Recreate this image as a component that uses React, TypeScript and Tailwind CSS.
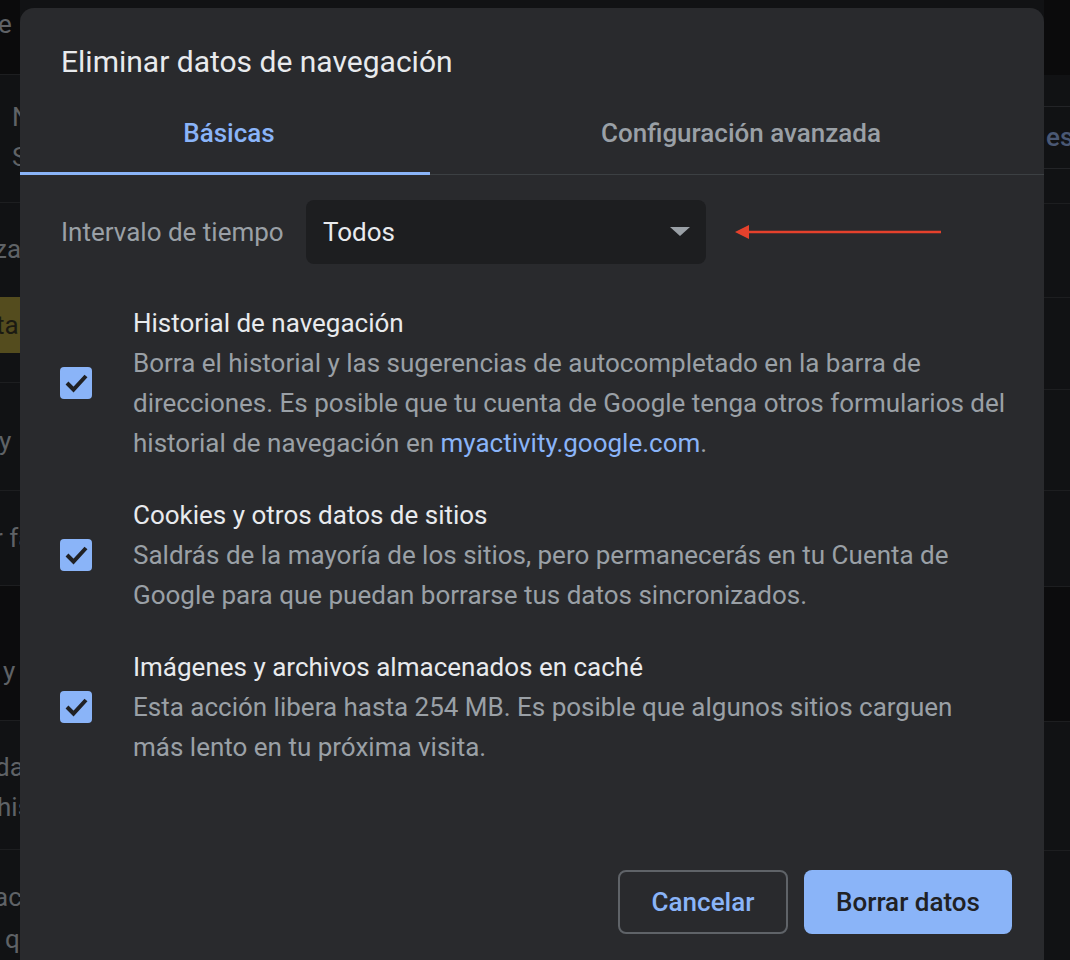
import React from 'react';

// background page strips peeking out on both sides of the dialog
function LeftStrip() {
  const txt = "text-[26px] leading-[40px] text-[#5f6266] whitespace-nowrap";
  return (
    <div className="w-[20px] flex flex-col overflow-hidden shrink-0">
      <div className="h-[76px] bg-[#0b0b0c] border-b border-[#1d1e20] pt-[4px]">
        <div className={`${txt} -ml-[2px]`}>e</div>
      </div>
      <div className="h-[129px] border-b border-[#1d1e20] pt-[22px] pl-[12px]">
        <div className={txt}>N</div>
        <div className={txt}>S</div>
      </div>
      <div className="h-[95px] pt-[26px]">
        <div className={`${txt} -ml-[6px]`}>za</div>
      </div>
      <div className="h-[87px] border-b border-[#1d1e20]">
        <div className="h-[56px] bg-[#544c1e] flex items-center">
          <div className="text-[26px] text-[#1b1a12] -ml-[4px] whitespace-nowrap">ta</div>
        </div>
      </div>
      <div className="h-[108px] border-b border-[#1d1e20] pt-[38px]">
        <div className={`${txt} -ml-[1px]`}>y</div>
      </div>
      <div className="h-[95px] pt-[27px]">
        <div className={`${txt} -ml-[6px]`}>r fa</div>
      </div>
      <div className="h-[137px] bg-[#0c0c0d] border-y border-[#1d1e20] pt-[65px]">
        <div className={`${txt} pl-[3px]`}>y</div>
      </div>
      <div className="h-[130px] border-b border-[#1d1e20] pt-[26px]">
        <div className={`${txt} -ml-[5px] leading-[37px]`}>da</div>
        <div className={`${txt} -ml-[3px] leading-[37px]`}>his</div>
      </div>
      <div className="h-[110px] pt-[26px]">
        <div className={`${txt} -ml-[6px] leading-[42px]`}>ac</div>
        <div className={`${txt} pl-[5px] leading-[42px]`}>q</div>
      </div>
    </div>
  );
}

function RightStrip() {
  return (
    <div className="w-[26px] flex flex-col overflow-hidden shrink-0">
      <div className="h-[76px] bg-[#0b0b0c]" />
      <div className="h-[32px] border-b border-[#232427]" />
      <div className="h-[62px] border-b border-[#232427] flex items-center">
        <div className="text-[26px] font-medium text-[#4a5874] ml-[2px] whitespace-nowrap">esa</div>
      </div>
      <div className="h-[35px] border-b border-[#1d1e20]" />
      <div className="h-[95px] border-b border-[#1d1e20]" />
      <div className="h-[93px] border-b border-[#1d1e20]" />
      <div className="h-[102px] border-b border-[#1d1e20]" />
      <div className="h-[95px]" />
      <div className="h-[137px] bg-[#0c0c0d] border-y border-[#1d1e20]" />
      <div className="h-[130px] border-b border-[#1d1e20]" />
      <div className="h-[110px]" />
    </div>
  );
}

function Check() {
  return (
    <div className="w-[32px] h-[32px] rounded-[4px] bg-[#8ab4f8] shrink-0 flex items-center justify-center">
      <svg width="32" height="32" viewBox="0 0 32 32">
        <polyline points="7,16 13.5,22.5 26,9" fill="none" stroke="#202124" strokeWidth="4" />
      </svg>
    </div>
  );
}

function Item({ title, lines }: { title: string; lines: React.ReactNode[] }) {
  return (
    <div className="flex items-center gap-[41px]">
      <Check />
      <div className="text-[26px] leading-[40px] whitespace-nowrap">
        <div className="text-[#e8eaed]">{title}</div>
        {lines.map((l, i) => (
          <div key={i} className="text-[#9aa0a6]">{l}</div>
        ))}
      </div>
    </div>
  );
}

export default function App() {
  return (
    <div className="relative w-[1070px] h-[960px] overflow-hidden bg-[#111214] font-['Roboto',sans-serif]">
      <div className="flex justify-between h-full">
        <LeftStrip />
        <RightStrip />
      </div>

      {/* dialog */}
      <div className="absolute left-[20px] top-[8px] w-[1024px] h-[1000px] rounded-[14px] bg-[#292a2d]">
        <div className="pt-[34px] px-[41px] text-[30px] leading-[40px] text-[#e8eaed]">
          Eliminar datos de navegación
        </div>

        {/* tabs */}
        <div className="mt-[10px] flex border-b border-[#3c4043]">
          <div className="relative w-[418px] h-[82px] flex items-center justify-center text-[26px] font-medium text-[#8ab4f8]">
            Básicas
            <div className="absolute left-0 right-[8px] -bottom-px h-[3px] bg-[#8ab4f8]" />
          </div>
          <div className="flex-1 h-[82px] flex items-center justify-center text-[26px] font-medium text-[#9aa0a6]">
            Configuración avanzada
          </div>
        </div>

        {/* time range */}
        <div className="mt-[25px] pl-[41px] flex items-center">
          <div className="w-[245px] text-[26px] text-[#9aa0a6]">Intervalo de tiempo</div>
          <div className="w-[400px] h-[64px] rounded-[8px] bg-[#1d1e20] flex items-center justify-between pl-[17px] pr-[16px]">
            <span className="text-[26px] text-[#e8eaed]">Todos</span>
            <svg width="20" height="10" viewBox="0 0 20 10">
              <polygon points="0,0 20,0 10,9" fill="#9aa0a6" />
            </svg>
          </div>
          <svg className="ml-[28px]" width="208" height="16" viewBox="0 0 208 16">
            <line x1="12" y1="8" x2="207" y2="8" stroke="#e5412c" strokeWidth="2.5" />
            <polygon points="1,8 15,1 15,15" fill="#e5412c" />
          </svg>
        </div>

        {/* checkboxes */}
        <div className="mt-[39px] pl-[40px] flex flex-col gap-[32px]">
          <Item
            title="Historial de navegación"
            lines={[
              'Borra el historial y las sugerencias de autocompletado en la barra de',
              'direcciones. Es posible que tu cuenta de Google tenga otros formularios del',
              <>historial de navegación en <span className="text-[#8ab4f8]">myactivity.google.com</span>.</>,
            ]}
          />
          <Item
            title="Cookies y otros datos de sitios"
            lines={[
              'Saldrás de la mayoría de los sitios, pero permanecerás en tu Cuenta de',
              'Google para que puedan borrarse tus datos sincronizados.',
            ]}
          />
          <Item
            title="Imágenes y archivos almacenados en caché"
            lines={[
              'Esta acción libera hasta 254 MB. Es posible que algunos sitios carguen',
              'más lento en tu próxima visita.',
            ]}
          />
        </div>

        {/* actions */}
        <div className="mt-[103px] pr-[32px] flex justify-end gap-[16px]">
          <button className="w-[170px] h-[64px] rounded-[8px] border-2 border-[#5f6368] text-[26px] font-medium text-[#8ab4f8]">
            Cancelar
          </button>
          <button className="w-[208px] h-[64px] rounded-[8px] bg-[#8ab4f8] text-[26px] font-medium text-[#202124]">
            Borrar datos
          </button>
        </div>
      </div>
    </div>
  );
}
